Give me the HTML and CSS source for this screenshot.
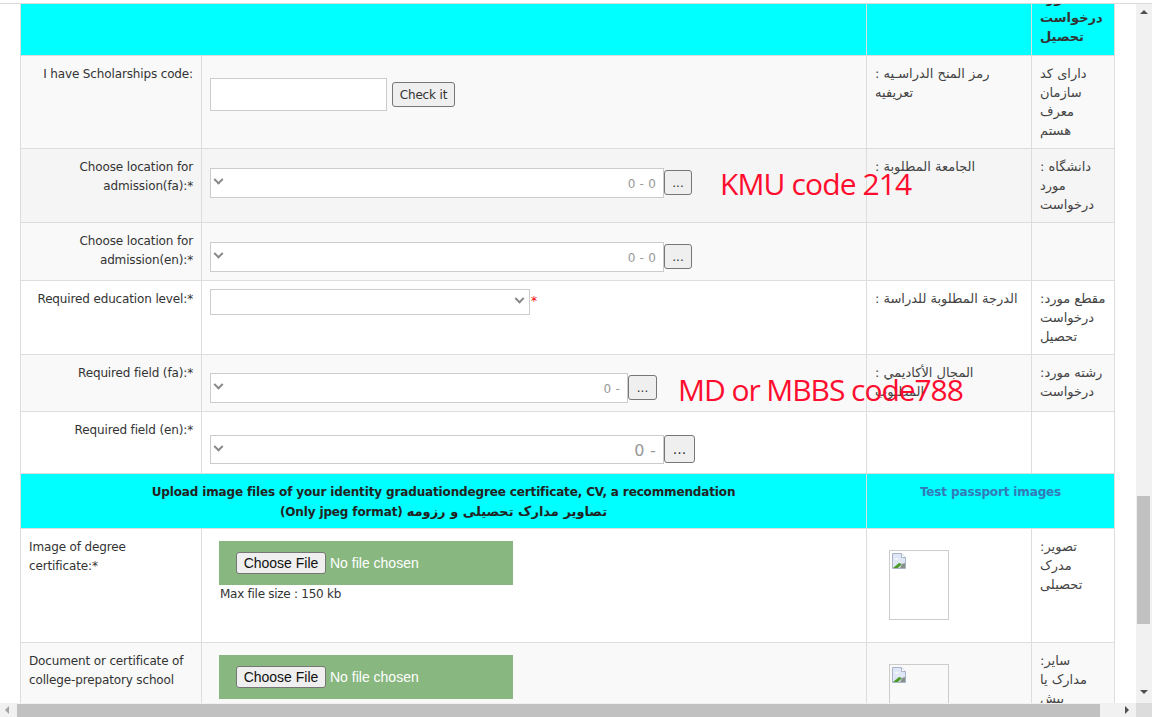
FILE: index.html
```html
<!DOCTYPE html>
<html lang="en">
<head>
<meta charset="utf-8">
<title>Application form</title>
<link rel="stylesheet" href="styles.css">
</head>
<body>
<div class="window">
  <div class="content">
    <div class="sheet">
      <table class="form">
        <colgroup><col class="c1"><col class="c2"><col class="c3"><col class="c4"></colgroup>
        <tr class="r-head">
          <td colspan="2"></td><td></td>
          <td class="fa bold"><div class="clip" dir="rtl"><div>مورد<br>درخواست<br>تحصیل</div></div></td>
        </tr>
        <tr class="r-code odd">
          <td class="lbl">I have Scholarships code:</td>
          <td class="field"><div class="inline"><input class="text" type="text"><button class="btn">Check it</button></div></td>
          <td class="ar" dir="rtl">رمز المنح الدراسـیه :<br>تعریفیه</td>
          <td class="fa" dir="rtl">دارای کد<br>سازمان<br>معرف<br>هستم</td>
        </tr>
        <tr class="r-loc1 even">
          <td class="lbl">Choose location for<br>admission(fa):*</td>
          <td class="field"><div class="inline combo-row"><div class="combo w453"><span class="chev"></span><span class="val">0 - 0</span></div><button class="dots">...</button></div></td>
          <td class="ar" dir="rtl">الجامعة المطلوبة :</td>
          <td class="fa" dir="rtl">دانشگاه :<br>مورد<br>درخواست</td>
        </tr>
        <tr class="r-loc2 odd">
          <td class="lbl">Choose location for<br>admission(en):*</td>
          <td class="field"><div class="inline combo-row"><div class="combo w453"><span class="chev"></span><span class="val">0 - 0</span></div><button class="dots">...</button></div></td>
          <td></td><td></td>
        </tr>
        <tr class="r-level white">
          <td class="lbl">Required education level:*</td>
          <td class="field top"><div class="inline"><div class="select"><span class="chev"></span></div><span class="req">*</span></div></td>
          <td class="ar" dir="rtl">الدرجة المطلوبة للدراسة :</td>
          <td class="fa" dir="rtl">مقطع مورد:<br>درخواست<br>تحصیل</td>
        </tr>
        <tr class="r-field1 odd">
          <td class="lbl">Required field (fa):*</td>
          <td class="field"><div class="inline combo-row"><div class="combo w418"><span class="chev"></span><span class="val">0 -</span></div><button class="dots wide">...</button></div></td>
          <td class="ar" dir="rtl">المجال الأكاديمي :<br>المطلوب</td>
          <td class="fa" dir="rtl">رشته مورد:<br>درخواست</td>
        </tr>
        <tr class="r-field2 white">
          <td class="lbl">Required field (en):*</td>
          <td class="field"><div class="inline combo-row"><div class="combo w453 tall"><span class="chev"></span><span class="val big">0 -</span></div><button class="dots tall">...</button></div></td>
          <td></td><td></td>
        </tr>
        <tr class="r-band">
          <td colspan="2" class="band">Upload image files of your identity graduationdegree certificate, CV, a recommendation<br>(Only jpeg format) <span class="fa-inline">تصاویر مدارک تحصیلی و رزومه</span></td>
          <td colspan="2" class="band link">Test passport images</td>
        </tr>
        <tr class="r-up white">
          <td class="lbl left">Image of degree<br>certificate:*</td>
          <td class="upload">
            <div class="filebox"><button class="choose">Choose File</button><span class="nofile">No file chosen</span></div>
            <div class="note">Max file size : 150 kb</div>
          </td>
          <td class="thumb"><div class="ph"><svg class="broken" viewBox="0 0 16 16" width="16" height="16"><path d="M1.5.5h9l4 4v11h-13z" fill="#dfe6f5" stroke="#a9b4c6"/><path d="M10.5.5v4h4" fill="#fff" stroke="#a9b4c6"/><path d="M3 6.5c2-1.6 4-1.4 5 0H3z" fill="#fff"/><path d="M2 15l6-5 3 1-4 4z" fill="#4c9a2a"/><path d="M11 11l3-1v5h-5z" fill="#8a8f8a"/></svg></div></td>
          <td class="fa" dir="rtl">تصویر:<br>مدرک<br>تحصیلی</td>
        </tr>
        <tr class="r-up odd">
          <td class="lbl left">Document or certificate of<br>college-prepatory school</td>
          <td class="upload">
            <div class="filebox"><button class="choose">Choose File</button><span class="nofile">No file chosen</span></div>
          </td>
          <td class="thumb"><div class="ph"><svg class="broken" viewBox="0 0 16 16" width="16" height="16"><path d="M1.5.5h9l4 4v11h-13z" fill="#dfe6f5" stroke="#a9b4c6"/><path d="M10.5.5v4h4" fill="#fff" stroke="#a9b4c6"/><path d="M3 6.5c2-1.6 4-1.4 5 0H3z" fill="#fff"/><path d="M2 15l6-5 3 1-4 4z" fill="#4c9a2a"/><path d="M11 11l3-1v5h-5z" fill="#8a8f8a"/></svg></div></td>
          <td class="fa" dir="rtl">سایر:<br>مدارک یا<br>پیش</td>
        </tr>
      </table>
      <div class="ink ink-kmu">KMU code 214</div>
      <div class="ink ink-md">MD or MBBS code788</div>
    </div>
    <div class="vbar">
      <div class="arrow up"></div>
      <div class="vtrack"><div class="vthumb"></div></div>
      <div class="arrow down"></div>
    </div>
  </div>
  <div class="hbar">
    <div class="harrow lft"></div>
    <div class="hthumb"></div>
    <div class="harrow rgt"></div>
    <div class="corner"></div>
  </div>
</div>
</body>
</html>
```
FILE: styles.css
```css
* { box-sizing: border-box; }
html, body { margin: 0; height: 100%; overflow: hidden; background: #fff; }
body { font: 12px/19px "DejaVu Sans", sans-serif; color: #333; letter-spacing: -0.14px; }
.window { width: 1152px; height: 717px; padding-top: 3px; display: flex; flex-direction: column; }
.content { flex: 1; min-height: 0; display: flex; overflow: hidden; border-top: 1px solid #dcdcdc; }
.sheet { position: relative; width: 1136px; padding-left: 20px; overflow: hidden; }

.form { width: 1094px; table-layout: fixed; border-collapse: collapse; border: 1px solid #ddd; border-top: 0; }
.c1 { width: 181px; } .c2 { width: 665px; } .c3 { width: 165px; } .c4 { width: 83px; }
.form td { border: 1px solid #ddd; padding: 9px 8px 4px; vertical-align: top; }
.odd td { background: #f9f9f9; }
.even td { background: #f5f5f5; }
.white td { background: #fff; }

.r-head { height: 51px; }
.form .r-head td { background: #0ff; padding: 0; border-top: 0; }
.r-code { height: 93px; } .r-loc1 { height: 74px; } .r-loc2 { height: 58px; }
.r-level { height: 74px; } .r-field1 { height: 57px; } .r-field2 { height: 62px; }
.r-band { height: 55px; } .r-up { height: 114px; }

.clip { height: 50px; overflow: hidden; display: flex; flex-direction: column; justify-content: flex-end; padding: 0 8px 8px; text-align: left; color: #333; }
.bold { font-weight: bold; }
.lbl { text-align: right; }
.lbl.left { text-align: left; }
.form .ar, .form .fa { color: #444; text-align: left; font-size: 13px; letter-spacing: 0; padding-top: 8px; }
.form .r-head .fa { padding-top: 0; }
.fa-inline { font-size: 13px; letter-spacing: 0; }

.form .field { padding: 8px 8px 4px; }
.inline { display: flex; align-items: center; gap: 5px; }
.combo-row { gap: 0; margin-top: 11px; }
.r-field1 .combo-row { margin-top: 10px; }
.r-field2 .combo-row { margin-top: 15px; }
.text { width: 177px; height: 33px; border: 1px solid #ccc; background: #fff; margin-top: 14px; }
.btn { width: 63px; height: 25px; margin-top: 15px; padding: 0; font: 12px "DejaVu Sans", sans-serif; letter-spacing: -0.14px; color: #333; background: #efefef; border: 1px solid #767676; border-radius: 3px; }
.combo { height: 30px; background: #fff; border: 1px solid #ccc; display: flex; align-items: center; justify-content: space-between; padding: 0 7px 0 4px; color: #999; }
.val { letter-spacing: 0.2px; padding-top: 3px; }
.w453 { width: 454px; } .w418 { width: 418px; }
.combo.tall { height: 29px; }
.val.big { font-size: 16px; }
.dots { width: 28px; height: 25px; padding: 0; background: #efefef; border: 1px solid #767676; border-radius: 3px; color: #333; font: 12px "DejaVu Sans", sans-serif; }
.dots.wide { width: 29px; }
.dots.tall { width: 31px; height: 28px; font-size: 14px; }
.chev { width: 7px; height: 7px; border-right: 2px solid #888; border-bottom: 2px solid #888; transform: rotate(45deg) translate(-2px, -2px); }
.select { width: 320px; height: 26px; border: 1px solid #ccc; background: #fff; display: flex; align-items: center; justify-content: flex-end; padding-right: 6px; }
.req { color: #e00; margin-left: -4px; }

.band { text-align: center; font-weight: bold; color: #222; }
.r-band td { background: #0ff; }
.form .band.link { color: #337ab7; }

.form .upload { padding: 12px 8px 4px 17px; }
.filebox { width: 294px; height: 44px; background: #88b77f; display: flex; align-items: center; padding-left: 17px; letter-spacing: 0; }
.choose { width: 90px; height: 22px; padding: 0; font: 14px "Liberation Sans", sans-serif; color: #111; background: #efefef; border: 1px solid #767676; border-radius: 3px; }
.nofile { margin-left: 4px; font: 14px "Liberation Sans", sans-serif; color: #fff; }
.note { padding-left: 1px; letter-spacing: -0.27px; }
.form .thumb { padding: 21px 0 0 22px; }
.ph { width: 60px; height: 70px; border: 1px solid #ccc; padding: 2px 1px; }
.broken { display: block; }

.ink { position: absolute; color: #ff0d2f; font: 30px/36px "Open Sans", sans-serif; letter-spacing: -0.88px; white-space: nowrap; }
.ink-kmu { left: 720px; top: 162px; }
.ink-md { left: 678px; top: 368px; letter-spacing: -1.05px; }

.vbar { width: 16px; background: #f1f1f1; display: flex; flex-direction: column; }
.vtrack { flex: 1; padding-top: 475px; }
.vthumb { height: 128px; margin: 0 2px 0 1px; background: #c1c1c1; }
.arrow { height: 17px; position: relative; }
.arrow::after { content: ""; position: absolute; left: 4px; border: 4px solid transparent; }
.arrow.up::after { top: 2px; border-bottom-color: #505050; }
.arrow.down::after { top: 4px; border-top-color: #505050; }

.hbar { height: 14px; background: #f1f1f1; display: flex; align-items: stretch; }
.hthumb { width: 1083px; margin-top: 1px; background: #c1c1c1; }
.harrow { width: 17px; position: relative; }
.harrow::after { content: ""; position: absolute; top: 3px; border: 4px solid transparent; }
.lft::after { left: 1px; border-right-color: #a3a3a3; }
.rgt { margin-left: 19px; }
.rgt::after { left: 6px; border-left-color: #505050; }
.corner { width: 16px; background: #dcdcdc; }
```
